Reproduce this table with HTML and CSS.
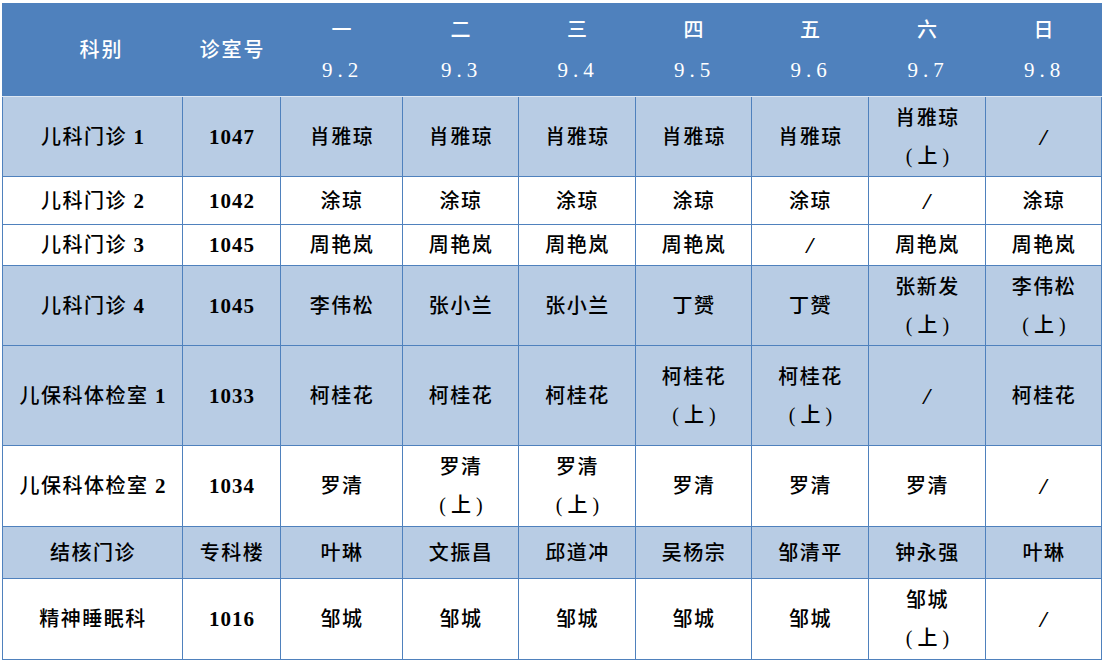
FILE: index.html
```html
<!DOCTYPE html>
<html lang="zh-CN">
<head>
<meta charset="utf-8">
<title>门诊排班表</title>
<link rel="stylesheet" href="styles.css">
</head>
<body>
<table class="roster">
  <colgroup>
    <col class="c-dept">
    <col class="c-room">
    <col class="c-d1">
    <col class="c-d2">
    <col class="c-d3">
    <col class="c-d4">
    <col class="c-d5">
    <col class="c-d6">
    <col class="c-d7">
  </colgroup>
  <thead>
    <tr class="h-head">
      <th class="th-dept">科别</th>
      <th>诊室号</th>
      <th>一<br><span class="date">9.2</span></th>
      <th>二<br><span class="date">9.3</span></th>
      <th>三<br><span class="date">9.4</span></th>
      <th>四<br><span class="date">9.5</span></th>
      <th>五<br><span class="date">9.6</span></th>
      <th>六<br><span class="date">9.7</span></th>
      <th>日<br><span class="date">9.8</span></th>
    </tr>
  </thead>
  <tbody>
    <tr class="alt h-80">
      <td>儿科门诊 <span class="n">1</span></td>
      <td class="n">1047</td>
      <td>肖雅琼</td>
      <td>肖雅琼</td>
      <td>肖雅琼</td>
      <td>肖雅琼</td>
      <td>肖雅琼</td>
      <td>肖雅琼<br><span class="am">(上)</span></td>
      <td class="sl">/</td>
    </tr>
    <tr class="h-48">
      <td>儿科门诊 <span class="n">2</span></td>
      <td class="n">1042</td>
      <td>涂琼</td>
      <td>涂琼</td>
      <td>涂琼</td>
      <td>涂琼</td>
      <td>涂琼</td>
      <td class="sl">/</td>
      <td>涂琼</td>
    </tr>
    <tr class="h-41">
      <td>儿科门诊 <span class="n">3</span></td>
      <td class="n">1045</td>
      <td>周艳岚</td>
      <td>周艳岚</td>
      <td>周艳岚</td>
      <td>周艳岚</td>
      <td class="sl">/</td>
      <td>周艳岚</td>
      <td>周艳岚</td>
    </tr>
    <tr class="alt h-80">
      <td>儿科门诊 <span class="n">4</span></td>
      <td class="n">1045</td>
      <td>李伟松</td>
      <td>张小兰</td>
      <td>张小兰</td>
      <td>丁赟</td>
      <td>丁赟</td>
      <td>张新发<br><span class="am">(上)</span></td>
      <td>李伟松<br><span class="am">(上)</span></td>
    </tr>
    <tr class="alt h-100">
      <td>儿保科体检室 <span class="n">1</span></td>
      <td class="n">1033</td>
      <td>柯桂花</td>
      <td>柯桂花</td>
      <td>柯桂花</td>
      <td>柯桂花<br><span class="am">(上)</span></td>
      <td>柯桂花<br><span class="am">(上)</span></td>
      <td class="sl">/</td>
      <td>柯桂花</td>
    </tr>
    <tr class="h-81">
      <td>儿保科体检室 <span class="n">2</span></td>
      <td class="n">1034</td>
      <td>罗清</td>
      <td>罗清<br><span class="am">(上)</span></td>
      <td>罗清<br><span class="am">(上)</span></td>
      <td>罗清</td>
      <td>罗清</td>
      <td>罗清</td>
      <td class="sl">/</td>
    </tr>
    <tr class="alt h-52">
      <td>结核门诊</td>
      <td>专科楼</td>
      <td>叶琳</td>
      <td>文振昌</td>
      <td>邱道冲</td>
      <td>吴杨宗</td>
      <td>邹清平</td>
      <td>钟永强</td>
      <td>叶琳</td>
    </tr>
    <tr class="h-81">
      <td>精神睡眠科</td>
      <td class="n">1016</td>
      <td>邹城</td>
      <td>邹城</td>
      <td>邹城</td>
      <td>邹城</td>
      <td>邹城</td>
      <td>邹城<br><span class="am">(上)</span></td>
      <td class="sl">/</td>
    </tr>
  </tbody>
</table>
</body>
</html>
```

FILE: styles.css
```css
html, body {
  margin: 0;
  padding: 0;
  background: #ffffff;
}

.roster {
  margin: 3px 0 0 2px;
  width: 1099px;
  border-collapse: collapse;
  table-layout: fixed;
  font-family: "Liberation Serif", "Noto Sans CJK SC", serif;
  font-size: 20px;
  color: #000000;
}

.c-dept { width: 180px; }
.c-room { width: 98px; }
.c-d1 { width: 122px; }
.c-d2 { width: 116px; }
.c-d3 { width: 117px; }
.c-d4 { width: 116px; }
.c-d5 { width: 117px; }
.c-d6 { width: 117px; }
.c-d7 { width: 116px; }

.roster th {
  background: #4f81bd;
  color: #ffffff;
  font-weight: 500;
  font-size: 20px;
  letter-spacing: 2px;
  line-height: 40px;
  padding: 0 0 0 2px;
  border: 1px solid #4f81bd;
  border-bottom: 1px solid #dce6f2;
}

.roster th.th-dept {
  padding-left: 18px;
}

.roster th .date {
  font-family: "Liberation Serif", serif;
  font-weight: normal;
  font-size: 21px;
  letter-spacing: 5px;
}

.roster td {
  border: 1px solid #4f81bd;
  text-align: center;
  vertical-align: middle;
  padding: 0 0 0 1px;
  line-height: 38px;
  letter-spacing: 1.5px;
  font-weight: 500;
}

.roster .alt td {
  background: #b8cce4;
}

.roster .n {
  font-family: "Liberation Serif", serif;
  font-weight: bold;
  font-size: 21px;
  letter-spacing: 1px;
}

.am {
  letter-spacing: 5px;
  padding-left: 5px;
}

.roster td.sl {
  font-size: 24px;
  font-weight: bold;
  font-style: italic;
}

.h-head { height: 93px; }
.h-80 { height: 80px; }
.h-48 { height: 48px; }
.h-41 { height: 41px; }
.h-100 { height: 100px; }
.h-81 { height: 81px; }
.h-52 { height: 52px; }
```
